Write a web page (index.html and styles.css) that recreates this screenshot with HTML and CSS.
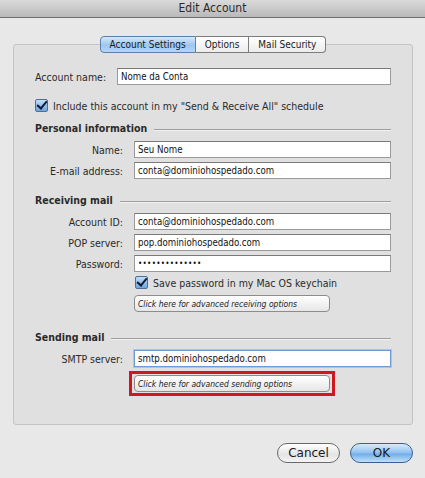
FILE: index.html
```
<!doctype html>
<html lang="en">
<head>
    <meta charset="UTF-8">
    <title>Edit Account</title>
    <link rel="stylesheet" href="styles.css">
</head>
<body>
    <div class="titlebar">Edit Account</div>
    <div class="window">
        <div class="tabs">
            <span class="tab active">Account Settings</span>
            <span class="tab">Options</span>
            <span class="tab">Mail Security</span>
        </div>
        <div class="panel">
            <div class="row first">
                <label class="label-left">Account name:</label>
                <div class="field">Nome da Conta</div>
            </div>
            <div class="check-row">
                <span class="checkbox"></span>
                <span>Include this account in my "Send &amp; Receive All" schedule</span>
            </div>

            <div class="section top"><span>Personal information</span><i></i></div>
            <div class="row">
                <label>Name:</label>
                <div class="field">Seu Nome</div>
            </div>
            <div class="row">
                <label>E-mail address:</label>
                <div class="field">conta@dominiohospedado.com</div>
            </div>

            <div class="section"><span>Receiving mail</span><i></i></div>
            <div class="row">
                <label>Account ID:</label>
                <div class="field">conta@dominiohospedado.com</div>
            </div>
            <div class="row">
                <label>POP server:</label>
                <div class="field">pop.dominiohospedado.com</div>
            </div>
            <div class="row">
                <label>Password:</label>
                <div class="field dots">&bull;&bull;&bull;&bull;&bull;&bull;&bull;&bull;&bull;&bull;&bull;&bull;&bull;&bull;</div>
            </div>
            <div class="check-row indent">
                <span class="checkbox"></span>
                <span>Save password in my Mac OS keychain</span>
            </div>
            <div class="adv-wrap">
                <button class="adv">Click here for advanced receiving options</button>
            </div>

            <div class="section"><span>Sending mail</span><i></i></div>
            <div class="row">
                <label>SMTP server:</label>
                <div class="field focused">smtp.dominiohospedado.com</div>
            </div>
            <div class="adv-wrap highlight">
                <button class="adv">Click here for advanced sending options</button>
            </div>
        </div>
        <div class="actions">
            <button class="pill">Cancel</button>
            <button class="pill default">OK</button>
        </div>
    </div>
</body>
</html>
```
FILE: styles.css
```
body {
    margin: 0;
    background: #e8e8e8;
    font-family: 'DejaVu Sans Condensed', 'DejaVu Sans', sans-serif;
    font-size: 10.5px;
    color: #2a2a2a;
}

.titlebar {
    height: 17px;
    line-height: 17px;
    text-align: center;
    font-size: 12px;
    color: #2a2a2a;
    background: linear-gradient(#dadada, #b9b9b9);
    border-bottom: 1px solid #6e6e6e;
}

.window {
    padding: 18px 12px 0 13px;
}

.tabs {
    display: flex;
    justify-content: center;
    position: relative;
    margin-bottom: -9px;
    z-index: 1;
}

.tab {
    height: 15px;
    line-height: 15px;
    padding: 0 9px;
    font-size: 10px;
    color: #1a1a1a;
    background: linear-gradient(#ffffff, #ececec);
    border: 1px solid #7c7c7c;
    border-left: none;
}

.tab:first-child {
    border-left: 1px solid #7c7c7c;
    border-radius: 4px 0 0 4px;
}

.tab:last-child {
    border-radius: 0 4px 4px 0;
}

.tab.active {
    background: linear-gradient(#d6e8fa, #9cc6f0 55%, #b6d6f6);
    border-color: #5d7fa8;
}

.panel {
    background: #e0e0e0;
    border: 1px solid #c4c4c4;
    border-radius: 3px;
    height: 379px;
    padding: 0 21px 0 0;
}

.row {
    display: flex;
    align-items: center;
    margin-top: 4px;
}

.row label {
    width: 109px;
    text-align: right;
    margin-right: 11px;
}

.row.first {
    margin-top: 23px;
    padding-left: 21px;
}

.row.first .label-left {
    width: auto;
    text-align: left;
}

.field {
    flex: 1;
    height: 15px;
    line-height: 15px;
    padding: 0 3px;
    font-size: 9.6px;
    color: #111;
    background: #fff;
    border: 1px solid #9a9a9a;
    border-top-color: #7a7a7a;
}

.field.dots {
    font-size: 8px;
    letter-spacing: 0.3px;
}

.field.focused {
    border: 1px solid #6e9ad6;
    box-shadow: 0 0 0 1px #a7c6ec;
}

.check-row {
    display: flex;
    align-items: center;
    gap: 5px;
    margin-top: 14px;
    padding-left: 21px;
}

.check-row.indent {
    padding-left: 121px;
    margin-top: 4px;
}

.checkbox {
    width: 11px;
    height: 11px;
    border: 1px solid #4d6e96;
    border-radius: 2px;
    background: linear-gradient(#c4ddf6, #6ea4e0);
    position: relative;
}

.checkbox::after {
    content: '';
    position: absolute;
    left: 3px;
    top: -1px;
    width: 4px;
    height: 8px;
    border: solid #0e1c33;
    border-width: 0 2px 2px 0;
    transform: rotate(40deg);
}

.section {
    display: flex;
    align-items: center;
    gap: 7px;
    margin: 15px 0 7px 21px;
    font-weight: bold;
    font-size: 10.5px;
}

.section.top {
    margin-top: 10px;
}

.section i {
    flex: 1;
    height: 1px;
    margin-top: 3px;
    background: #9e9e9e;
    border-bottom: 1px solid #f2f2f2;
}

.adv-wrap {
    margin: 2px 0 0 115px;
    padding: 1px 2px 1px 2px;
    width: 196px;
    border: 3px solid transparent;
}

.adv-wrap.highlight {
    margin-top: 4px;
    border-color: #d0161e;
}

.adv {
    display: block;
    width: 196px;
    height: 17px;
    padding: 0 3px;
    text-align: left;
    font-family: 'DejaVu Sans Condensed', 'DejaVu Sans', sans-serif;
    font-style: italic;
    font-size: 8.5px;
    color: #222;
    background: linear-gradient(#ffffff, #e6e6e6);
    border: 1px solid #8c8c8c;
    border-radius: 4px;
}

.actions {
    display: flex;
    justify-content: flex-end;
    gap: 10px;
    margin-top: 18px;
}

.pill {
    width: 63px;
    height: 20px;
    font-family: 'DejaVu Sans', sans-serif;
    font-size: 12px;
    color: #1a1a1a;
    background: linear-gradient(#ffffff, #e4e4e4 60%, #f4f4f4);
    border: 1px solid #6a6a6a;
    border-radius: 10px;
}

.pill.default {
    background: linear-gradient(#d8ebfc, #8fc0f0 50%, #6fadea 55%, #bfe0fb);
    border-color: #3d5f8e;
}
```
